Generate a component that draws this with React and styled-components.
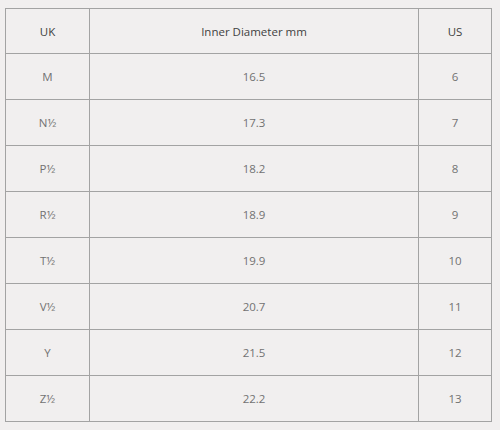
import React from "react";
import styled, { createGlobalStyle } from "styled-components";

const Global = createGlobalStyle`
  html, body {
    margin: 0;
    padding: 0;
    background: #f1efef;
  }
  body {
    font-family: "Open Sans", "Liberation Sans", sans-serif;
  }
`;

const Page = styled.div`
  padding: 8px 10px 10px 5px;
`;

const Table = styled.table`
  width: 486px;
  border-collapse: collapse;
  table-layout: fixed;
  background: #f1efef;
  border: 1px solid #a3a3a3;
`;

const Col = styled.col`
  width: ${(p) => p.$w}px;
`;

const Row = styled.tr`
  height: ${(p) => p.$h || 46}px;
`;

const HeadCell = styled.th`
  border: 1px solid #a3a3a3;
  font-weight: 400;
  font-size: 11.5px;
  color: #3f3f3f;
  text-align: center;
  vertical-align: middle;
  padding: 0;
`;

const Cell = styled.td`
  border: 1px solid #a3a3a3;
  font-size: 11.5px;
  color: #727272;
  text-align: center;
  vertical-align: middle;
  padding: 0;
`;

const rows = [
  ["M", "16.5", "6"],
  ["N½", "17.3", "7"],
  ["P½", "18.2", "8"],
  ["R½", "18.9", "9"],
  ["T½", "19.9", "10"],
  ["V½", "20.7", "11"],
  ["Y", "21.5", "12"],
  ["Z½", "22.2", "13"],
];

export default function App() {
  return (
    <Page>
      <Global />
      <Table>
        <colgroup>
          <Col $w={84} />
          <Col $w={329} />
          <Col $w={73} />
        </colgroup>
        <thead>
          <Row $h={45}>
            <HeadCell>UK</HeadCell>
            <HeadCell>Inner Diameter mm</HeadCell>
            <HeadCell>US</HeadCell>
          </Row>
        </thead>
        <tbody>
          {rows.map((r) => (
            <Row key={r[0]}>
              <Cell>{r[0]}</Cell>
              <Cell>{r[1]}</Cell>
              <Cell>{r[2]}</Cell>
            </Row>
          ))}
        </tbody>
      </Table>
    </Page>
  );
}
